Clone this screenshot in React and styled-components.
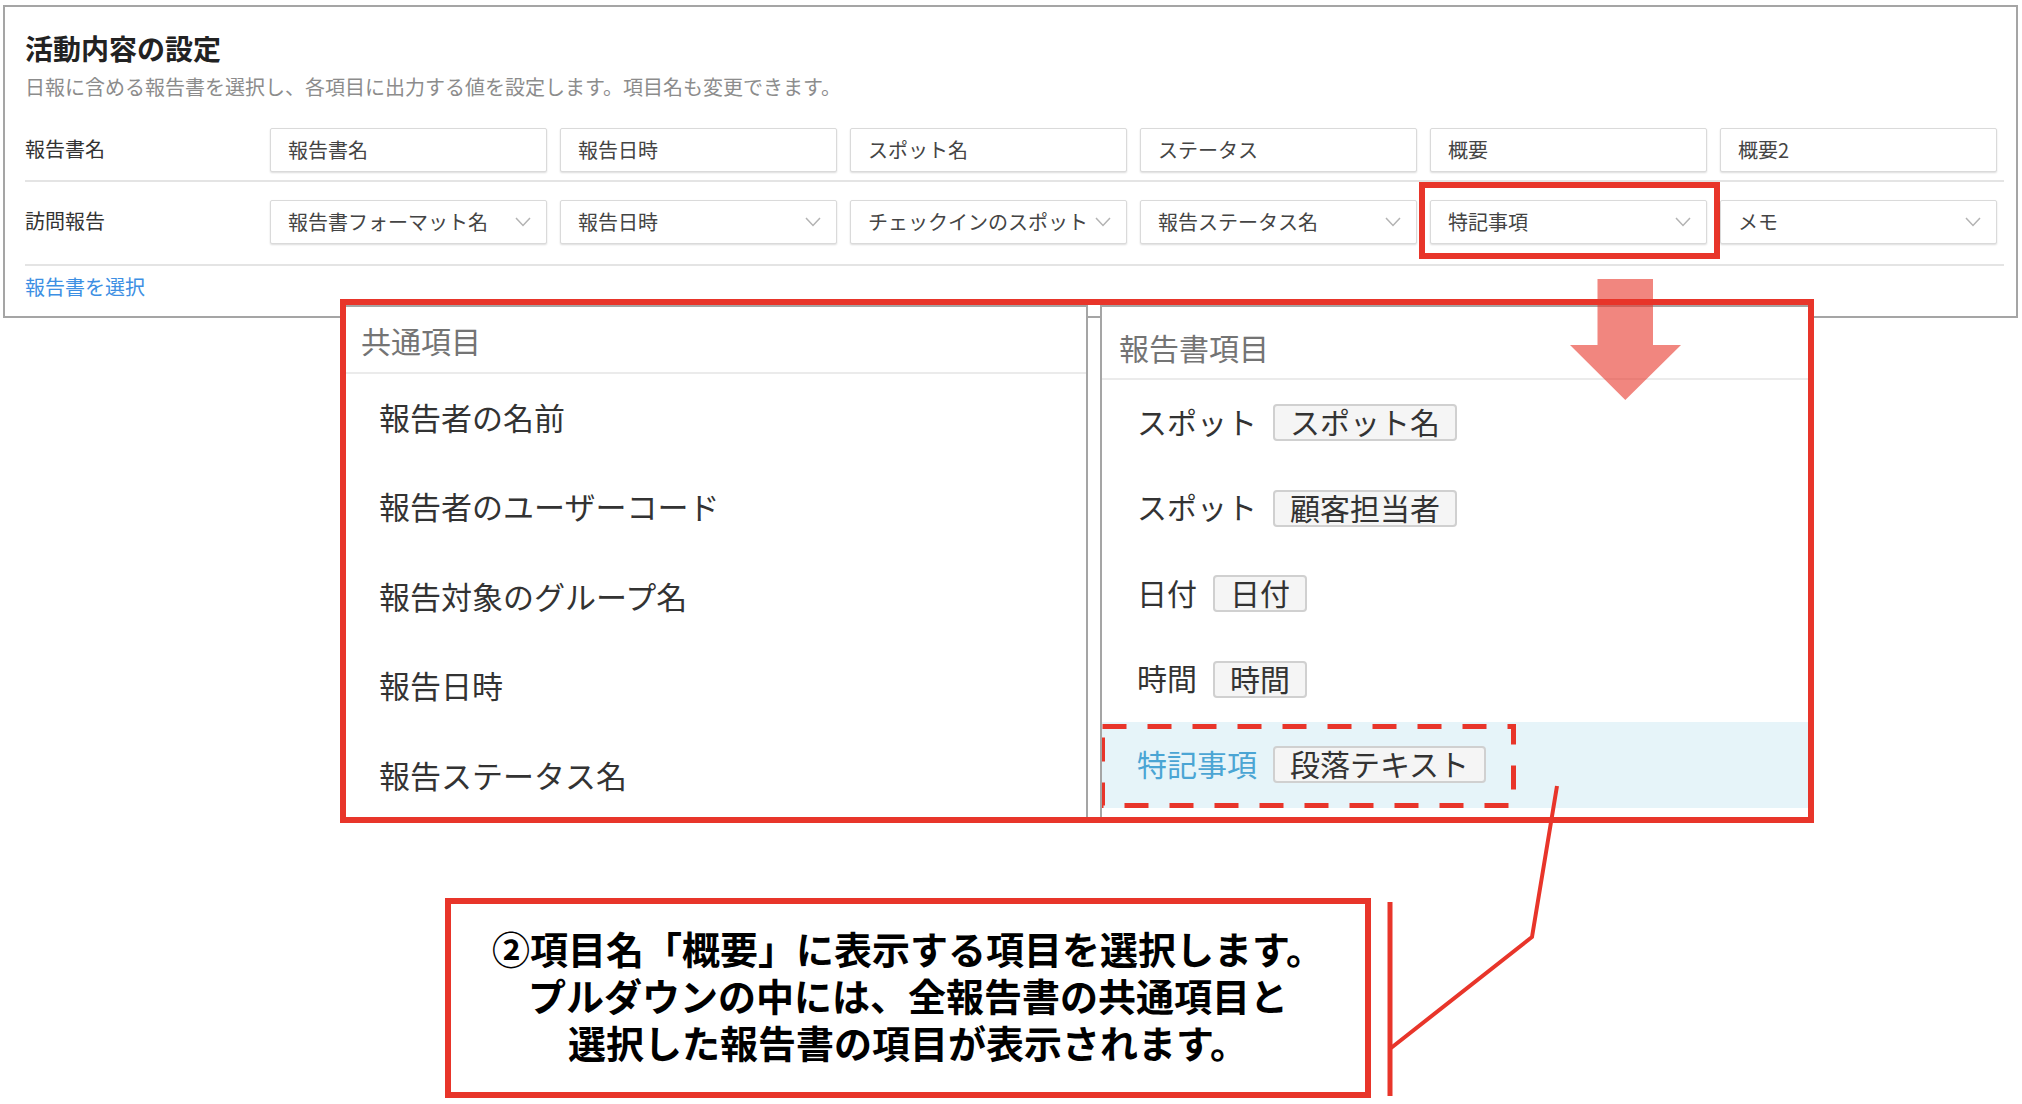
import React from 'react';
import styled, { createGlobalStyle } from 'styled-components';

const GlobalStyle = createGlobalStyle`
  html, body { margin: 0; padding: 0; background: #fff; }
  body {
    font-family: "Noto Sans CJK JP", "Noto Sans", sans-serif;
    color: #333;
  }
  * { box-sizing: border-box; }
`;

const RED = '#e8352a';

const Page = styled.div`
  position: relative;
  width: 2022px;
  height: 1104px;
  overflow: hidden;
  padding: 5px 4px 0 3px;
  background: #fff;
`;

/* ---------- settings card ---------- */

const Card = styled.section`
  border: 2px solid #a5a5a5;
  padding: 27px 12px 16px 20px;
  background: #fff;
`;

const Title = styled.h2`
  margin: 0;
  font-size: 28px;
  line-height: 28px;
  font-weight: 700;
  color: #222;
`;

const Lead = styled.p`
  margin: 13px 0 0;
  font-size: 20px;
  line-height: 24px;
  color: #8c8c8c;
`;

const Rows = styled.div`
  margin-top: 29px;
`;

const Row = styled.div`
  display: grid;
  grid-template-columns: 232px repeat(6, 277px);
  column-gap: 13px;
  align-items: center;
  padding: ${(p) => (p.$first ? '0 0 8px' : '18px 0 20px')};
  border-bottom: 2px solid #e4e4e4;
`;

const RowLabel = styled.div`
  font-size: 20px;
  line-height: 24px;
  padding-bottom: 3px;
  color: #333;
`;

const Field = styled.div`
  position: relative;
  height: 44px;
  display: flex;
  align-items: center;
  justify-content: space-between;
  padding: 0 15px 2px 17px;
  border: 1px solid #dadada;
  border-radius: 2px;
  box-shadow: 0 1px 2px rgba(0, 0, 0, 0.14);
  background: #fff;
  font-size: 20px;
  color: #444;
  white-space: nowrap;

  &::after {
    content: '';
    display: ${(p) => (p.$marked ? 'block' : 'none')};
    position: absolute;
    top: -19px;
    right: -14px;
    bottom: -16px;
    left: -12px;
    border: 6px solid ${RED};
    pointer-events: none;
  }
`;

const FieldText = styled.span`
  overflow: hidden;
`;

const Chevron = () => (
  <svg width="16" height="10" viewBox="0 0 16 10" style={{ flex: 'none', marginTop: '2px' }}>
    <polyline points="1,1 8,8.5 15,1" fill="none" stroke="#b3b3b3" strokeWidth="1.5" />
  </svg>
);

const PickLink = styled.a`
  display: block;
  margin-top: 9px;
  font-size: 20px;
  line-height: 24px;
  padding-bottom: 1px;
  color: #3d8fe3;
  text-decoration: none;
`;

/* ---------- dropdown menu ---------- */

const Menu = styled.div`
  position: relative;
  z-index: 2;
  margin: -19px 0 0 337px;
  width: 1474px;
  height: 524px;
  border: 6px solid ${RED};
  display: flex;
  gap: 12px;
`;

const Panel = styled.div`
  position: relative;
  display: flex;
  flex-direction: column;
  background: #fff;
  border-top: 2px solid #a5a5a5;
  border-left: ${(p) => (p.$side === 'right' ? '2px solid #a5a5a5' : 'none')};
  border-right: ${(p) => (p.$side === 'left' ? '2px solid #a5a5a5' : 'none')};
  width: ${(p) => (p.$side === 'left' ? '742px' : 'auto')};
  flex: ${(p) => (p.$side === 'left' ? 'none' : '1')};
  overflow: hidden;
`;

const PanelHead = styled.div`
  flex: none;
  height: ${(p) => p.$h}px;
  padding: ${(p) => p.$top}px 0 0 ${(p) => p.$left}px;
  display: flex;
  align-items: center;
  border-bottom: 2px solid #ebebeb;
  font-size: 30px;
  color: #747474;
`;

const CommonItem = styled.div`
  flex: none;
  height: 89.5px;
  display: flex;
  align-items: center;
  padding: 0 0 5px 33px;
  font-size: 31px;
  color: #333;
`;

const ReportItem = styled.div`
  position: relative;
  flex: none;
  height: 85.5px;
  display: flex;
  align-items: center;
  gap: 16px;
  padding-left: 35px;
  font-size: 30px;
  color: ${(p) => (p.$active ? '#4ba5d4' : '#333')};
  background: ${(p) => (p.$active ? '#e6f4f9' : 'transparent')};
`;

const ItemLabel = styled.span`
  margin-top: -4px;
`;

const Tag = styled.span`
  height: 37px;
  display: inline-flex;
  align-items: center;
  padding: 0 15px 3px;
  border: 2px solid #d0d0d0;
  border-radius: 4px;
  background: #f5f5f5;
  color: #333;
  font-size: 30px;
`;

const DashedMark = styled.svg`
  position: absolute;
  left: -2px;
  top: 2px;
  pointer-events: none;
`;

/* ---------- callout ---------- */

const Callout = styled.div`
  margin: 75px 0 0 442px;
  width: 926px;
  height: 200px;
  border: 6px solid ${RED};
  display: flex;
  flex-direction: column;
  align-items: center;
  justify-content: center;
  padding-bottom: 7px;
  text-align: center;
  font-size: 38px;
  font-weight: 700;
  color: #000;
`;

const CalloutLine = styled.div`
  height: 47px;
  line-height: 47px;
  white-space: nowrap;
`;

const Overlay = styled.svg`
  position: absolute;
  left: 0;
  top: 0;
  z-index: 5;
  pointer-events: none;
`;

const fieldNames = ['報告書名', '報告日時', 'スポット名', 'ステータス', '概要', '概要2'];
const fieldSources = [
  '報告書フォーマット名',
  '報告日時',
  'チェックインのスポット',
  '報告ステータス名',
  '特記事項',
  'メモ',
];

const commonItems = ['報告者の名前', '報告者のユーザーコード', '報告対象のグループ名', '報告日時', '報告ステータス名'];

const reportItems = [
  { label: 'スポット', type: 'スポット名' },
  { label: 'スポット', type: '顧客担当者' },
  { label: '日付', type: '日付' },
  { label: '時間', type: '時間' },
  { label: '特記事項', type: '段落テキスト', active: true },
];

const calloutLines = [
  '②項目名「概要」に表示する項目を選択します。',
  'プルダウンの中には、全報告書の共通項目と',
  '選択した報告書の項目が表示されます。',
];

export default function App() {
  return (
    <Page>
      <GlobalStyle />
      <Card>
        <Title>活動内容の設定</Title>
        <Lead>日報に含める報告書を選択し、各項目に出力する値を設定します。項目名も変更できます。</Lead>
        <Rows>
          <Row $first>
            <RowLabel>報告書名</RowLabel>
            {fieldNames.map((n) => (
              <Field key={n}>
                <FieldText>{n}</FieldText>
              </Field>
            ))}
          </Row>
          <Row>
            <RowLabel>訪問報告</RowLabel>
            {fieldSources.map((n) => (
              <Field key={n} $marked={n === '特記事項'}>
                <FieldText>{n}</FieldText>
                <Chevron />
              </Field>
            ))}
          </Row>
        </Rows>
        <PickLink href="#">報告書を選択</PickLink>
      </Card>

      <Menu>
        <Panel $side="left">
          <PanelHead $h={67} $top={0} $left={15}>共通項目</PanelHead>
          {commonItems.map((c) => (
            <CommonItem key={c}>{c}</CommonItem>
          ))}
        </Panel>
        <Panel $side="right">
          <PanelHead $h={73} $top={9} $left={17}>報告書項目</PanelHead>
          {reportItems.map((r, i) => (
            <ReportItem key={i} $active={r.active}>
              <ItemLabel>{r.label}</ItemLabel>
              <Tag>{r.type}</Tag>
              {r.active && (
                <DashedMark width="416" height="84" viewBox="0 0 416 84">
                  <rect
                    x="2.5"
                    y="2.5"
                    width="411"
                    height="79"
                    fill="none"
                    stroke={RED}
                    strokeWidth="5"
                    strokeDasharray="24 21"
                  />
                </DashedMark>
              )}
            </ReportItem>
          ))}
        </Panel>
      </Menu>

      <Callout>
        {calloutLines.map((l) => (
          <CalloutLine key={l}>{l}</CalloutLine>
        ))}
      </Callout>

      <Overlay width="2022" height="1104" viewBox="0 0 2022 1104">
        <polygon
          points="1597.5,279 1653,279 1653,345 1681,345 1625.3,400 1570,345 1597.5,345"
          fill={RED}
          opacity="0.6"
        />
        <line x1="1390" y1="902" x2="1390" y2="1096" stroke={RED} strokeWidth="5" />
        <polyline
          points="1391,1048 1532,937 1557,786"
          fill="none"
          stroke={RED}
          strokeWidth="4"
        />
      </Overlay>
    </Page>
  );
}
